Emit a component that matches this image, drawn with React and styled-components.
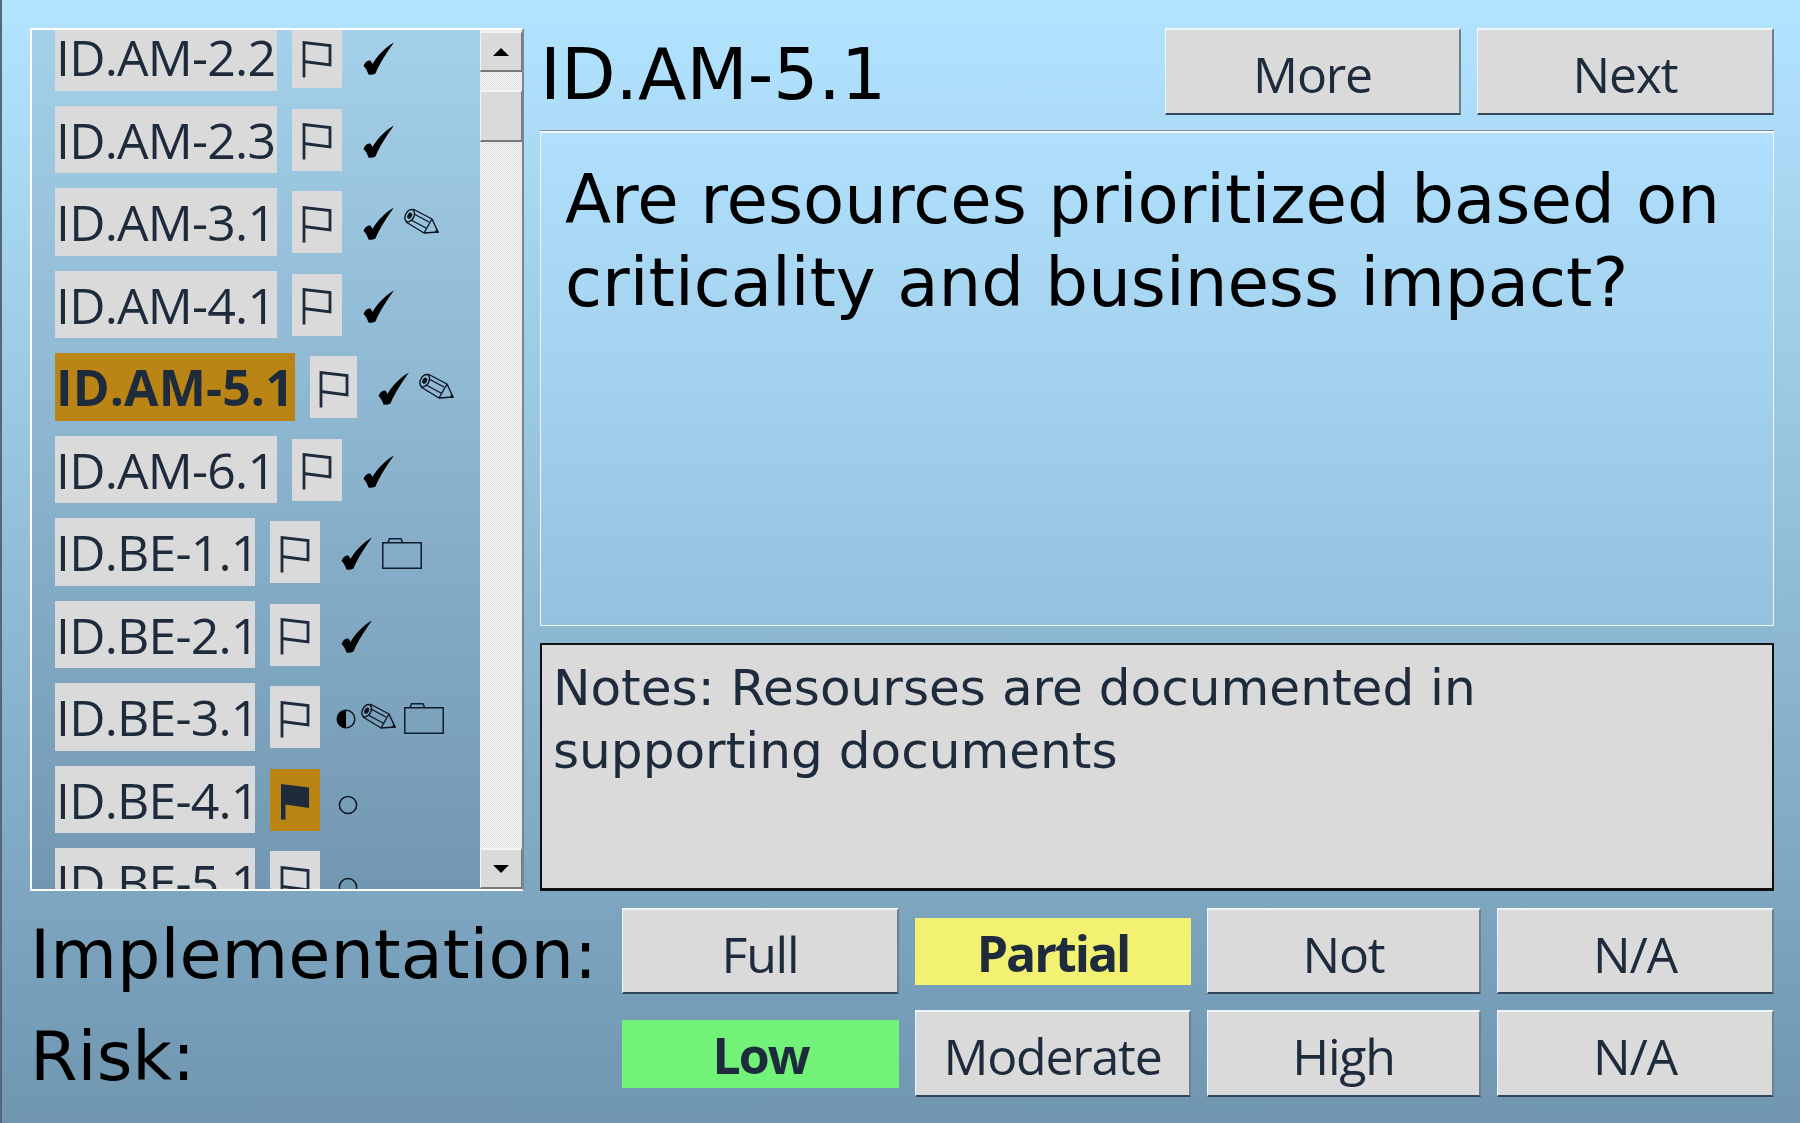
import React from 'react';
import styled, { createGlobalStyle } from 'styled-components';

const GlobalStyle = createGlobalStyle`
  html, body {
    margin: 0;
    padding: 0;
    height: 100%;
    overflow: hidden;
  }
`;

const INK = '#1e2b3c';
const GREY = '#dbdada';
const AMBER = '#bb8516';

const Page = styled.div`
  box-sizing: border-box;
  width: 1800px;
  height: 1123px;
  padding: 28px 26px 26px 28px;
  border-left: 2px solid #54687a;
  background: linear-gradient(#b3e4ff, #7096b0);
  display: flex;
  flex-direction: column;
`;

const Main = styled.div`
  display: flex;
  gap: 16px;
  height: 863px;
  flex-shrink: 0;
`;

const ListPanel = styled.div`
  box-sizing: border-box;
  width: 494px;
  height: 100%;
  display: flex;
  border: 2px solid #fff;
  border-right-color: #7b8790;
  background: linear-gradient(#a4d0ea, #7297b1);
`;

const ListViewport = styled.div`
  flex: 1;
  overflow: hidden;
  padding-left: 23px;
`;

const ListContent = styled.div`
  margin-top: -7px;
`;

const Row = styled.div`
  display: flex;
  align-items: flex-start;
  height: 82.5px;
  flex-shrink: 0;
`;

const ItemLabel = styled.div`
  box-sizing: border-box;
  width: ${({ $width }) => $width}px;
  height: 67.5px;
  background: ${({ $active }) => ($active ? AMBER : GREY)};
  color: ${INK};
  font-family: "Open Sans", sans-serif;
  font-size: 50px;
  font-weight: ${({ $active }) => ($active ? 700 : 400)};
  letter-spacing: ${({ $active }) => ($active ? '0.1px' : '-0.8px')};
  line-height: 69px;
  padding-left: 1px;
  white-space: nowrap;
`;

const FlagButton = styled.div`
  box-sizing: border-box;
  width: ${({ $width }) => $width}px;
  height: 62px;
  margin: 3px 21px 0 15px;
  padding-top: 4px;
  background: ${({ $on }) => ($on ? AMBER : GREY)};
  display: flex;
  align-items: center;
  justify-content: center;
  flex-shrink: 0;
`;

const Status = styled.div`
  display: flex;
  align-items: flex-start;
  gap: 10px;
`;

const Glyph = styled.svg`
  display: block;
  flex-shrink: 0;
  margin-top: ${({ $top }) => $top}px;
  margin-left: ${({ $left }) => $left || 0}px;
  margin-right: ${({ $right }) => $right || 0}px;
`;

const Scrollbar = styled.div`
  width: 42px;
  height: 100%;
  flex-shrink: 0;
  display: flex;
  flex-direction: column;
  padding-top: 1px;
  box-sizing: border-box;
  background: repeating-conic-gradient(#fff 0 25%, #d4d4d4 0 50%) 0 0 / 2px 2px;
`;

const ScrollButton = styled.div`
  box-sizing: border-box;
  height: 41px;
  flex-shrink: 0;
  background: ${GREY};
  border-top: 2px solid #f4f4f4;
  border-left: 1px solid #f4f4f4;
  border-bottom: 2px solid #777;
  border-right: 1px solid #777;
  display: flex;
  align-items: center;
  justify-content: center;
`;

const ScrollThumb = styled(ScrollButton)`
  height: 52px;
  margin-top: 18px;
`;

const ScrollTrack = styled.div`
  flex: 1;
`;

const Arrow = styled.div`
  width: 0;
  height: 0;
  border-left: 8px solid transparent;
  border-right: 8px solid transparent;
  ${({ $down }) => ($down ? 'border-top: 8px solid #000;' : 'border-bottom: 8px solid #000;')}
`;

const RightColumn = styled.div`
  flex: 1;
  display: flex;
  flex-direction: column;
`;

const Header = styled.div`
  display: flex;
  align-items: stretch;
  gap: 16px;
  height: 87px;
  flex-shrink: 0;
`;

const Heading = styled.h1`
  flex: 1;
  margin: 0;
  color: #000;
  font-family: "DejaVu Sans", sans-serif;
  font-size: 70.9px;
  font-weight: 400;
  line-height: 94px;
`;

const PushButton = styled.button`
  box-sizing: border-box;
  width: ${({ $width }) => ($width ? `${$width}px` : 'auto')};
  margin: 0;
  padding: 5px 0 0;
  background: ${GREY};
  border: none;
  border-top: 2px solid #eef6fb;
  border-left: 1px solid #eef6fb;
  border-right: 2px solid #6f7f8c;
  border-bottom: 2px solid #33465a;
  color: ${INK};
  font-family: "Open Sans", sans-serif;
  font-size: 50px;
  font-weight: 400;
  letter-spacing: -1.2px;
`;

const Question = styled.div`
  box-sizing: border-box;
  height: 495px;
  margin-top: 16px;
  flex-shrink: 0;
  padding: 25px 20px 0 24px;
  border: 1px solid #eef6fb;
  border-top: 2px solid #eef6fb;
  box-shadow: 0 -1px 0 #7f8c96;
  background: linear-gradient(#b0e0fd, #96c1de);
  color: #000;
  font-family: "DejaVu Sans", sans-serif;
  font-size: 67.4px;
  line-height: 83px;
`;

const Notes = styled.div`
  box-sizing: border-box;
  flex: 1;
  margin-top: 17px;
  padding: 11px 12px 0 11px;
  background: ${GREY};
  border: 2px solid #111;
  border-bottom-width: 3px;
  color: ${INK};
  font-family: "DejaVu Sans", sans-serif;
  font-size: 50.1px;
  line-height: 63px;
`;

const ChoiceGrid = styled.div`
  display: grid;
  grid-template-columns: 576px 277px 276px 274px 277px;
  grid-template-rows: 86px 87px;
  column-gap: 16px;
  row-gap: 16px;
  margin-top: 17px;
`;

const RowLabel = styled.div`
  color: #000;
  font-family: "DejaVu Sans", sans-serif;
  font-size: 68.5px;
  line-height: 92px;
`;

const Selected = styled.div`
  align-self: center;
  height: ${({ $height }) => $height}px;
  padding-top: 3px;
  box-sizing: border-box;
  background: ${({ $color }) => $color};
  color: ${INK};
  font-family: "Open Sans", sans-serif;
  font-size: 50px;
  font-weight: 700;
  letter-spacing: -2px;
  display: flex;
  align-items: center;
  justify-content: center;
`;

const ChoiceButton = styled(PushButton)``;

const Check = () => (
  <Glyph $top={19} width="31" height="33" viewBox="0 0 31 33">
    <path d="M.5 24C2 20.5 4 18 7 18.5C8.5 19.5 9 21 9.5 22C14 14 22 5.5 31 .5C25 8.5 17 20.5 12.5 31.5C10 32.8 7.5 33 5.5 32.5C4.5 29.5 3 26 .5 24Z" fill="#000" />
  </Glyph>
);

const Pencil = ({ right }) => (
  <Glyph $top={20} $right={right} width="35" height="26" viewBox="0 0 35 26">
    <g fill="none" stroke="#0c1420" strokeWidth="1.4" strokeLinejoin="round">
      <ellipse cx="5.7" cy="7.7" rx="4.2" ry="6.6" transform="rotate(28 5.7 7.7)" />
      <ellipse cx="5.7" cy="7.7" rx="1.5" ry="2.6" transform="rotate(28 5.7 7.7)" fill="#0c1420" />
      <path d="M9 1L28 11L34 24L20 25L2 14" />
      <path d="M10 6L25 14M7 12L22 20M28 11L20 25" />
    </g>
    <path d="M30 24.7L33 21L35 25Z" fill="#0c1420" />
  </Glyph>
);

const Folder = () => (
  <Glyph $top={20} width="40" height="31" viewBox="0 0 40 31">
    <path d="M.75 4.75H39.25V30.25H.75ZM6 4.5L7.5 .75H19L20.5 4.5" fill="none" stroke="#0f1c2c" strokeWidth="1.5" />
  </Glyph>
);

const HalfCircle = () => (
  <Glyph $top={26} $left={-5} $right={-5} width="20" height="20" viewBox="0 0 20 20">
    <circle cx="10" cy="10" r="8.8" fill="none" stroke="#0c1420" strokeWidth="1.5" />
    <path d="M10 1.2A8.8 8.8 0 0 0 10 18.8Z" fill="#000" />
  </Glyph>
);

const Circle = () => (
  <Glyph $top={29} $left={-3} width="20" height="20" viewBox="0 0 20 20">
    <circle cx="10" cy="10" r="8.6" fill="none" stroke="#0c1420" strokeWidth="1.5" />
  </Glyph>
);

const Flag = ({ filled }) => (
  <svg width="30" height="37" viewBox="0 0 30 37">
    {filled ? (
      <path d="M1 36.5V1L29 4.5V25L5.5 21.5V36.5Z" fill={INK} />
    ) : (
      <path d="M2 36.5V1.5L28 4.5V24L2 20.5" fill="none" stroke={INK} strokeWidth="2.8" />
    )}
  </svg>
);

const STATUS = { check: Check, pencil: Pencil, folder: Folder, half: HalfCircle, circle: Circle };

const items = [
  { id: 'ID.AM-2.2', marks: ['check'] },
  { id: 'ID.AM-2.3', marks: ['check'] },
  { id: 'ID.AM-3.1', marks: ['check', 'pencil'] },
  { id: 'ID.AM-4.1', marks: ['check'] },
  { id: 'ID.AM-5.1', marks: ['check', 'pencil'], active: true },
  { id: 'ID.AM-6.1', marks: ['check'] },
  { id: 'ID.BE-1.1', marks: ['check', 'folder'] },
  { id: 'ID.BE-2.1', marks: ['check'] },
  { id: 'ID.BE-3.1', marks: ['half', 'pencil', 'folder'] },
  { id: 'ID.BE-4.1', marks: ['circle'], flagged: true },
  { id: 'ID.BE-5.1', marks: ['circle'] },
];

const labelWidth = (item) => {
  if (item.active) return 240;
  return item.id.startsWith('ID.AM') ? 222 : 200;
};

const App = () => (
  <Page>
    <GlobalStyle />
    <Main>
      <ListPanel>
        <ListViewport>
          <ListContent>
            {items.map((item) => (
              <Row key={item.id}>
                <ItemLabel $width={labelWidth(item)} $active={item.active}>{item.id}</ItemLabel>
                <FlagButton $width={item.active ? 47 : 50} $on={item.flagged}>
                  <Flag filled={item.flagged} />
                </FlagButton>
                <Status>
                  {item.marks.map((mark) => {
                    const Mark = STATUS[mark];
                    return <Mark key={mark} right={item.marks.includes('half') ? -2 : 0} />;
                  })}
                </Status>
              </Row>
            ))}
          </ListContent>
        </ListViewport>
        <Scrollbar>
          <ScrollButton><Arrow /></ScrollButton>
          <ScrollThumb />
          <ScrollTrack />
          <ScrollButton><Arrow $down /></ScrollButton>
        </Scrollbar>
      </ListPanel>
      <RightColumn>
        <Header>
          <Heading>ID.AM-5.1</Heading>
          <PushButton $width={296}>More</PushButton>
          <PushButton $width={297}>Next</PushButton>
        </Header>
        <Question>Are resources prioritized based on criticality and business impact?</Question>
        <Notes>Notes: Resourses are documented in supporting documents</Notes>
      </RightColumn>
    </Main>
    <ChoiceGrid>
      <RowLabel>Implementation:</RowLabel>
      <ChoiceButton>Full</ChoiceButton>
      <Selected $color="#f3f172" $height={67}>Partial</Selected>
      <ChoiceButton>Not</ChoiceButton>
      <ChoiceButton>N/A</ChoiceButton>
      <RowLabel>Risk:</RowLabel>
      <Selected $color="#72f278" $height={68}>Low</Selected>
      <ChoiceButton>Moderate</ChoiceButton>
      <ChoiceButton>High</ChoiceButton>
      <ChoiceButton>N/A</ChoiceButton>
    </ChoiceGrid>
  </Page>
);

export default App;
